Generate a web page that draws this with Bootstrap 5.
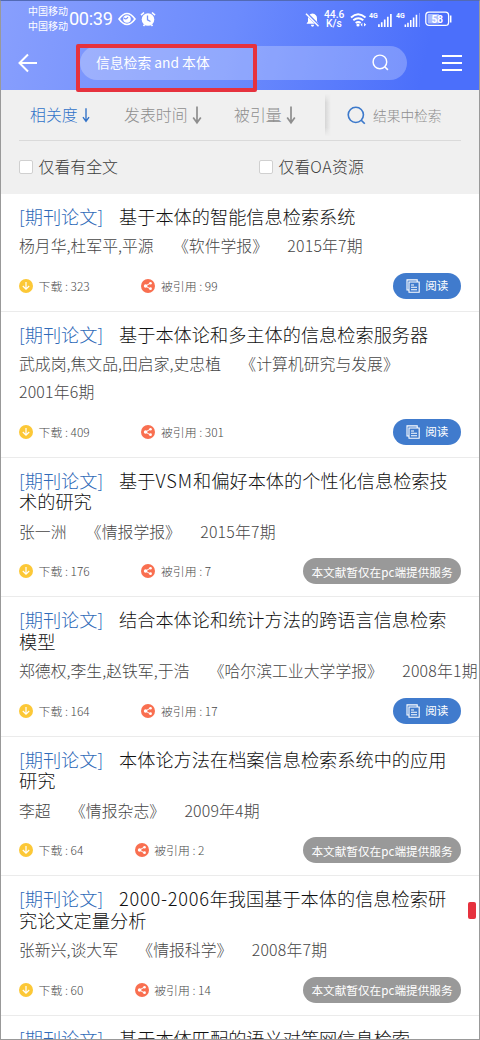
<!DOCTYPE html>
<html lang="zh-CN">
<head>
<meta charset="utf-8">
<meta name="viewport" content="width=device-width, initial-scale=1">
<title>信息检索 and 本体</title>
<link rel="stylesheet" href="https://cdn.jsdelivr.net/npm/bootstrap@5.3.0/dist/css/bootstrap.min.css">
<style>
body{font-family:"Noto Sans CJK SC",sans-serif;font-weight:300;color:#222;background:#fff}
.phone{width:480px;height:1040px;border:1px solid #999;border-top-color:#526ab5}
.hero{height:89px;background:linear-gradient(102deg,#889ffd 0%,#6c8bfd 48%,#4b6ffb 88%);color:#fff}
.statusbar{height:39px;padding:0 27px}
.carrier{font-size:10px;line-height:14.3px;width:41px;font-weight:400;white-space:nowrap;margin-top:-4px}
.clock{font:400 18.2px/20px Roboto,sans-serif;letter-spacing:-.35px;width:45px;margin-top:-3px}
.speed{font:500 10.3px/9.5px Roboto,sans-serif;width:20px;margin-top:-3px}
.statusbar svg{margin-top:-3px}
.searchrow{height:46px;padding-left:17px;padding-right:17px}
.pill{width:327px;height:34px;border-radius:17px;background:rgba(255,255,255,.25);font-size:13.8px;padding:0 18px 2px 16px;font-weight:400}
.redbox{left:75px;top:43px;width:181px;height:48px;border:4px solid #e6323e;border-radius:2px;z-index:3}
.filters{height:104px;background:#f0f0f0}
.tabs{height:51px;border-bottom:1px solid #dadada;margin:0 18px;color:#8e8e8e;font-size:15.9px;white-space:nowrap}
.tabs .active-tab{color:#3172c8}
.tab{height:50px}
.shade{width:6px;height:42px;background:linear-gradient(90deg,#d6d6d6,#f0f0f0);-webkit-mask-image:linear-gradient(transparent,#000 20%,#000 80%,transparent)}
.checks{height:52px;padding:0 17.5px;font-size:15.9px;color:#3c3c3c}
.tick{width:14px;height:14px;border:1px solid #d0d0d0;border-radius:2px;background:#fff;margin-right:6px}
.paper{padding:11.8px 18px 11.7px;border-bottom:1px solid #ebebeb}
.ttl{font-size:18.2px;line-height:21.7px;white-space:nowrap;color:#101010}
.wide-vsm{letter-spacing:1px}
.wide-year{letter-spacing:.75px}
.tag{color:#2f6ab8;display:inline-block;width:100px}
.meta{font-size:15.85px;line-height:28px;margin-top:4.7px;column-gap:19.3px;color:#464646;white-space:nowrap}
.meta span:last-child{letter-spacing:.2px}
.stats{height:26px;margin-top:12.7px;margin-bottom:.3px;font-size:11.9px;color:#484848;white-space:nowrap}
.stats svg{margin-right:5.6px}
.dl{width:122.3px}
.dl.short{width:115.6px}
.read{width:68px;height:26px;border-radius:13px;background:#407bcd;color:#fff;font-size:11.6px;font-weight:400}
.pconly{width:158px;height:26px;border-radius:13px;background:#999;color:#fff;font-size:11.65px;font-weight:400}
.mark-red{left:467px;top:901px;width:8px;height:17px;border-radius:2px;background:#e6323e}
</style>
</head>
<body>
<svg width="0" height="0" class="d-none">
<symbol id="i-dl" viewBox="0 0 14 14"><circle cx="7" cy="7" r="7" fill="#fcc837"/><path d="M7 3v6.8M3.8 7 7 10.2 10.2 7" fill="none" stroke="#fff" stroke-width="1.2"/></symbol>
<symbol id="i-share" viewBox="0 0 14 14"><circle cx="7" cy="7" r="7" fill="#f96f50"/><path d="M9.3 4.2 4.5 7l4.8 2.9" fill="none" stroke="#fff" stroke-width="1"/><g fill="#fff"><circle cx="4.6" cy="7" r="1.8"/><circle cx="9.5" cy="4.3" r="1.3"/><circle cx="9.5" cy="9.7" r="1.4"/></g></symbol>
<symbol id="i-read" viewBox="0 0 14 14"><g fill="none" stroke="#fff" stroke-width="1.1"><path d="M3 11H1V.9h10.2V3"/><path d="M3 3h10.2v10.2H3zM5 6h3M5 8.3h6M5 10.7h6"/></g></symbol>
<symbol id="i-down" viewBox="0 0 10 18"><path d="M5 0v16M1.2 11 5 16.3 8.8 11" fill="none" stroke="currentColor" stroke-width="1.7"/></symbol>
<symbol id="i-search" viewBox="0 0 20 20"><circle cx="9.3" cy="9.3" r="8" fill="none" stroke="currentColor" stroke-width="1.7"/><path d="m15 15 3.7 3.7" stroke="currentColor" stroke-width="1.8"/></symbol>
<symbol id="i-signal" viewBox="0 0 16 15"><path d="M1.5 15v-3M4.5 15v-5M7.7 15V7M11 15V4M14.3 15V1" stroke="#fff" stroke-width="1.8"/></symbol>
</svg>
<div class="phone position-relative overflow-hidden">
<header class="hero">
<div class="statusbar d-flex align-items-center">
<div class="carrier">中国移动<br>中国移动</div>
<div class="clock">00:39</div>
<svg class="ms-1" width="18" height="14" viewBox="0 0 18 14"><path d="M1 7q8-11 16 0-8 11-16 0Z" fill="none" stroke="#fff" stroke-width="1.6"/><circle cx="9" cy="7" r="3.8" fill="#fff"/><path d="M6 6q2 2 4-.8" fill="none" stroke="#7892fd" stroke-width="1.2"/></svg>
<svg width="16" height="16" viewBox="0 0 16 16" style="margin-left:4px"><circle cx="8" cy="8.5" r="6.3" fill="#fff"/><path d="M1 4.2 4 1.5M15 4.2 12 1.5M3.5 15l1.2-1.5M12.5 15l-1.2-1.5" stroke="#fff" stroke-width="1.6"/><path d="M7.5 4.5v4.3l3 1.7" fill="none" stroke="#7390fd" stroke-width="1.3"/></svg>
<svg class="ms-auto" width="15" height="15" viewBox="0 0 15 15"><path d="M1.5 11.7 3 9.5V6.5Q3 2.3 7.5 1.5 12 2.3 12 6.5v3l1.5 2.2ZM5.8 12.7h3.4q-.4 2-1.7 2t-1.7-2" fill="#fff"/><path d="m1 1 13 13" stroke="#6887fc" stroke-width="3"/><path d="m1 1.7 12.5 12.5" stroke="#fff" stroke-width="1.4"/></svg>
<div class="speed text-center" style="margin-left:4px">44.6<br>K/s</div>
<svg width="17" height="15" viewBox="0 0 17 15" style="margin-left:6px"><g fill="none" stroke="#fff" stroke-width="1.9"><path d="M1 5.5q7-6.5 14.5 0M3.3 8.3q5-4.3 10 0M5.7 11q2.5-2 5 0"/></g><circle cx="8" cy="13" r="1.6" fill="#fff"/><path d="m12.3 10.8-1.8 1.9 1.8 1.9zM14 10.8l2.2 1.9-2.2 1.9z" fill="#fff"/></svg>
<svg width="25" height="17" viewBox="0 0 25 17" style="margin-left:2px"><text x="0" y="7" font-family="Roboto" font-size="7" font-weight="700" fill="#fff">4G</text><use href="#i-signal" x="8" y="2" width="16" height="14"/></svg>
<svg width="25" height="17" viewBox="0 0 25 17" style="margin-left:2px"><text x="0" y="7" font-family="Roboto" font-size="7" font-weight="700" fill="#fff">4G</text><use href="#i-signal" x="8" y="3" width="14" height="13"/><path d="M23.5 2v14" stroke="#8ca2fd"/></svg>
<svg width="27" height="16" viewBox="0 0 27 16" style="margin-left:4px"><rect x=".8" y="1.2" width="22.8" height="13.2" rx="3.2" fill="none" stroke="#fff" stroke-width="1.3"/><rect x="2.7" y="3" width="11.5" height="9.6" rx="1" fill="#a9bbfe"/><path d="M25.7 4.5v7" stroke="#fff" stroke-width="1.5"/><text x="12.2" y="11.5" text-anchor="middle" font-family="Roboto" font-size="10" font-weight="700" fill="#fff">58</text></svg>
</div>
<div class="searchrow d-flex align-items-center">
<svg width="20" height="20" viewBox="0 0 20 20"><path d="M19 10H2M10 1.5 1.5 10l8.5 8.5" fill="none" stroke="#fff" stroke-width="2"/></svg>
<div class="pill d-flex align-items-center justify-content-between" style="margin-left:42px"><span>信息检索 and 本体</span><svg width="17" height="17"><use href="#i-search"/></svg></div>
<svg class="ms-auto" width="20" height="18" viewBox="0 0 20 18"><path d="M0 2h20M0 9h20M0 16h20" stroke="#fff" stroke-width="2"/></svg>
</div>
</header>
<section class="filters">
<div class="tabs d-flex">
<div class="tab active-tab d-flex align-items-center" style="width:94px;padding-left:11px">相关度<svg width="8" height="17" class="ms-1"><use href="#i-down"/></svg></div>
<div class="tab d-flex align-items-center" style="width:111px;padding-left:11px">发表时间<svg width="10" height="19" class="ms-1"><use href="#i-down"/></svg></div>
<div class="tab d-flex align-items-center" style="width:101px;padding-left:10px">被引量<svg width="10" height="19" class="ms-1"><use href="#i-down"/></svg></div>
<div class="tab d-flex align-items-center" style="font-size:13.7px"><i class="shade"></i><svg width="19" height="19" style="color:#3c79cb;margin:0 7px 0 16px"><use href="#i-search"/></svg>结果中检索</div>
</div>
<div class="checks d-flex">
<label class="d-flex align-items-center" style="width:240px"><i class="tick"></i>仅看有全文</label>
<label class="d-flex align-items-center"><i class="tick"></i>仅看<span style="letter-spacing:.5px">OA</span>资源</label>
</div>
</section>
<main id="papers"></main>
<div class="redbox position-absolute"></div>
<div class="mark-red position-absolute"></div>
</div>
<script>
const papers = [
 ["基于本体的智能信息检索系统", ["杨月华,杜军平,平源","《软件学报》","2015年7期"], 323, 99, true],
 ["基于本体论和多主体的信息检索服务器", ["武成岗,焦文品,田启家,史忠植","《计算机研究与发展》","2001年6期"], 409, 301, true],
 ["基于<span class='wide-vsm'>VSM</span>和偏好本体的个性化信息检索技<br>术的研究", ["张一洲","《情报学报》","2015年7期"], 176, 7, false],
 ["结合本体论和统计方法的跨语言信息检索<br>模型", ["郑德权,李生,赵铁军,于浩","《哈尔滨工业大学学报》","2008年1期"], 164, 17, true],
 ["本体论方法在档案信息检索系统中的应用<br>研究", ["李超","《情报杂志》","2009年4期"], 64, 2, false],
 ["<span class='wide-year'>2000-2006</span>年我国基于本体的信息检索研<br>究论文定量分析", ["张新兴,谈大军","《情报科学》","2008年7期"], 60, 14, false],
 ["基于本体匹配的语义对等网信息检索", [], 0, 0, false]
];
document.getElementById("papers").innerHTML = papers.map(([t, m, d, c, r], i) => `
<article class="paper">
<div class="ttl"><span class="tag">[期刊论文]</span>${t}</div>
${m.length ? `<div class="meta d-flex ${i === 1 ? "flex-wrap" : ""}">${m.map(x => `<span>${x}</span>`).join("")}</div>
<div class="stats d-flex align-items-center">
<div class="dl ${d < 100 ? "short" : ""} d-flex align-items-center"><svg width="14" height="14"><use href="#i-dl"/></svg>下载 : ${d}</div>
<div class="d-flex align-items-center"><svg width="14" height="14"><use href="#i-share"/></svg>被引用 : ${c}</div>
${r ? '<div class="read ms-auto d-flex align-items-center justify-content-center"><svg width="14" height="14"><use href="#i-read"/></svg>阅读</div>'
    : '<div class="pconly ms-auto d-flex align-items-center justify-content-center">本文献暂仅在pc端提供服务</div>'}
</div>` : ""}
</article>`).join("");
</script>
<script src="https://cdn.jsdelivr.net/npm/bootstrap@5.3.0/dist/js/bootstrap.bundle.min.js"></script>
</body>
</html>
